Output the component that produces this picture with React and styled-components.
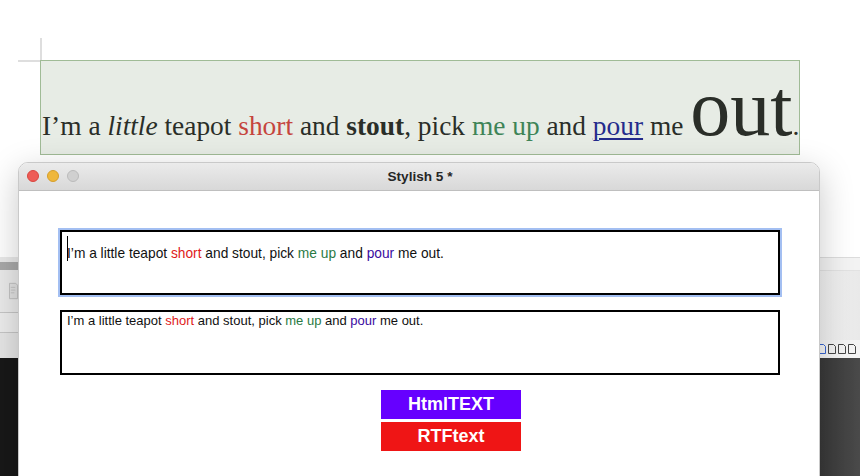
import React from "react";
import styled, { createGlobalStyle } from "styled-components";

const Global = createGlobalStyle`
  html, body { margin: 0; padding: 0; background: #ffffff; }
  body { width: 860px; height: 476px; overflow: hidden; }
  #root { width: 860px; height: 476px; }
`;

const Desktop = styled.div`
  position: relative;
  width: 860px;
  height: 476px;
  overflow: hidden;
  background: #ffffff;
  display: flex;
  flex-direction: column;
`;

/* ---------- background layout application ---------- */
const Canvas = styled.div`
  height: 257px;
  flex: none;
  background: #ffffff;
  padding: 60px 0 0 40px;
  box-sizing: border-box;
`;

const Frame = styled.div`
  position: relative;
  width: 760px;
  height: 95px;
  box-sizing: border-box;
  background: #e7ece5;
  border: 1px solid #a0bb96;
  display: flex;
  align-items: flex-end;
  padding: 0 0 14px 1px;

  &::before {
    content: "";
    position: absolute;
    left: -1px;
    top: -23px;
    width: 2px;
    height: 22px;
    background: #dedede;
  }
  &::after {
    content: "";
    position: absolute;
    left: -23px;
    top: -1px;
    width: 22px;
    height: 2px;
    background: #dedede;
  }
`;

const Story = styled.p`
  margin: 0;
  font-family: "Liberation Serif", "DejaVu Serif", serif;
  font-size: 27.4px;
  line-height: 1;
  color: #2a2e28;
  white-space: nowrap;
`;

const Word = styled.span`
  color: ${(p) => p.$color || "inherit"};
  font-style: ${(p) => (p.$italic ? "italic" : "normal")};
  font-weight: ${(p) => (p.$bold ? 700 : 400)};
  text-decoration: ${(p) => (p.$underline ? "underline" : "none")};
  text-decoration-thickness: 1.5px;
  text-underline-offset: 3px;
`;

const Big = styled.span`
  font-size: 80px;
  line-height: 0.8;
`;

const ToolBand = styled.div`
  height: 101px;
  flex: none;
  display: flex;
  justify-content: space-between;
`;

const LeftPanel = styled.div`
  width: 18px;
  display: flex;
  flex-direction: column;
`;

const RightPanel = styled.div`
  width: 42px;
  display: flex;
  flex-direction: column;
`;

const Band = styled.div`
  height: ${(p) => p.$h}px;
  flex: none;
  background: ${(p) => p.$bg};
  border-bottom: ${(p) => (p.$line ? `1px solid ${p.$line}` : "none")};
  box-sizing: border-box;
  display: flex;
  align-items: center;
  overflow: hidden;
`;

const Dock = styled.div`
  flex: 1;
  display: flex;
  justify-content: space-between;
`;

const DockLeft = styled.div`
  width: 18px;
  background: #181818;
`;

const DockRight = styled.div`
  width: 42px;
  background: linear-gradient(90deg, #383838, #4a4a4a);
`;

const PageIcons = styled.div`
  display: flex;
  gap: 2px;
`;

/* ---------- front window ---------- */
const Window = styled.div`
  position: absolute;
  left: 18px;
  top: 162px;
  width: 802px;
  height: 340px;
  box-sizing: border-box;
  border: 1px solid #c9c9c9;
  border-radius: 10px 10px 0 0;
  background: #ffffff;
  box-shadow: 0 10px 34px rgba(0, 0, 0, 0.22);
  display: flex;
  flex-direction: column;
  overflow: hidden;
`;

const TitleBar = styled.div`
  position: relative;
  height: 28px;
  flex: none;
  box-sizing: border-box;
  background: linear-gradient(#ebebeb, #d8d8d8);
  border-bottom: 1px solid #bfbfbf;
  display: flex;
  align-items: center;
  justify-content: center;
`;

const Lights = styled.div`
  position: absolute;
  left: 8px;
  top: 7px;
  display: flex;
  gap: 8px;
`;

const Light = styled.span`
  width: 12px;
  height: 12px;
  border-radius: 50%;
  box-sizing: border-box;
  background: ${(p) => p.$bg};
  border: 0.5px solid ${(p) => p.$edge};
`;

const Title = styled.div`
  font-family: "Liberation Sans", Arial, sans-serif;
  font-weight: 700;
  font-size: 13.6px;
  color: #262626;
  padding-left: 2px;
`;

const Content = styled.div`
  flex: 1;
  padding: 39px 39px 0 41px;
  display: flex;
  flex-direction: column;
  gap: 15px;
`;

const Field = styled.div`
  height: 65px;
  box-sizing: border-box;
  border: 2px solid #000000;
  font-family: "Liberation Sans", Arial, sans-serif;
  font-size: ${(p) => (p.$focused ? 13.75 : 13)}px;
  color: #111111;
  padding: ${(p) => (p.$focused ? "4px 0 0 5px" : "0 0 0 5px")};
  line-height: ${(p) => (p.$focused ? "35px" : "18px")};
  box-shadow: ${(p) => (p.$focused ? "0 0 0 2px #a3bff2" : "none")};
  white-space: nowrap;
`;

const Caret = styled.span`
  display: inline-block;
  width: 1px;
  height: 25px;
  background: #000;
  vertical-align: top;
  margin-right: -1px;
`;

const Tint = styled.span`
  color: ${(p) => p.$color};
`;

const Buttons = styled.div`
  display: flex;
  flex-direction: column;
  gap: 3px;
  padding-left: 321px;
`;

const Action = styled.div`
  width: 140px;
  height: 29px;
  background: ${(p) => p.$bg};
  color: #ffffff;
  font-family: "Liberation Sans", Arial, sans-serif;
  font-weight: 700;
  font-size: 18px;
  display: flex;
  align-items: center;
  justify-content: center;
`;

const Sentence = ({ red, green, blue }) => (
  <>
    I’m a little teapot <Tint $color={red}>short</Tint> and stout, pick{" "}
    <Tint $color={green}>me up</Tint> and <Tint $color={blue}>pour</Tint> me out.
  </>
);

const DocIcon = () => (
  <svg width="10" height="18" viewBox="0 0 10 18" style={{ marginLeft: 9 }}>
    <path d="M0.5 0.5h7l2 2v15h-9z" fill="#e2e2e2" stroke="#bdbdbd" />
    <path d="M2 5h5M2 8h5M2 11h4" stroke="#c4c4c4" />
  </svg>
);

const PageGlyph = ({ color = "#333" }) => (
  <svg width="8" height="10" viewBox="0 0 8 10">
    <path d="M0.5 0.5h5l2 2v7h-7z" fill="none" stroke={color} strokeWidth="0.9" />
  </svg>
);

export default function App() {
  return (
    <>
      <Global />
      <Desktop>
        <Canvas>
          <Frame>
            <Story>
              I’m a <Word $italic>little</Word> teapot{" "}
              <Word $color="#c5453d">short</Word> and <Word $bold>stout</Word>, pick{" "}
              <Word $color="#3e8457">me up</Word> and{" "}
              <Word $color="#242b8c" $underline>
                pour
              </Word>{" "}
              me <Big>out</Big>.
            </Story>
          </Frame>
        </Canvas>
        <ToolBand>
          <LeftPanel>
            <Band $h={5} $bg="#e9e9e9" />
            <Band $h={8} $bg="#a9a9a9" />
            <Band $h={43} $bg="#ebebeb" $line="#c6c6c6">
              <DocIcon />
            </Band>
            <Band $h={20} $bg="#ededed" $line="#c6c6c6" />
            <Band $h={25} $bg="#e6e6e6" />
          </LeftPanel>
          <RightPanel>
            <Band $h={1} $bg="#dcdcdc" />
            <Band $h={13} $bg="#f3f3f3" $line="#e2e2e2" />
            <Band $h={69} $bg="linear-gradient(90deg,#f2f2f2,#e9e9e9)" />
            <Band $h={18} $bg="#f4f4f4">
              <PageIcons>
                <PageGlyph color="#2255cc" />
                <PageGlyph />
                <PageGlyph />
                <PageGlyph />
              </PageIcons>
            </Band>
          </RightPanel>
        </ToolBand>
        <Dock>
          <DockLeft />
          <DockRight />
        </Dock>

        <Window>
          <TitleBar>
            <Lights>
              <Light $bg="#ee5c56" $edge="#d8463f" />
              <Light $bg="#efb73b" $edge="#d59e2a" />
              <Light $bg="#d0d0d0" $edge="#bababa" />
            </Lights>
            <Title>Stylish 5 *</Title>
          </TitleBar>
          <Content>
            <Field $focused>
              <Caret />
              <Sentence red="#e01a1a" green="#2a7a44" blue="#3a0aa0" />
            </Field>
            <Field>
              <Sentence red="#e01a1a" green="#2a7a44" blue="#3a0aa0" />
            </Field>
            <Buttons>
              <Action $bg="#6600ff">HtmlTEXT</Action>
              <Action $bg="#ef1515">RTFtext</Action>
            </Buttons>
          </Content>
        </Window>
      </Desktop>
    </>
  );
}
